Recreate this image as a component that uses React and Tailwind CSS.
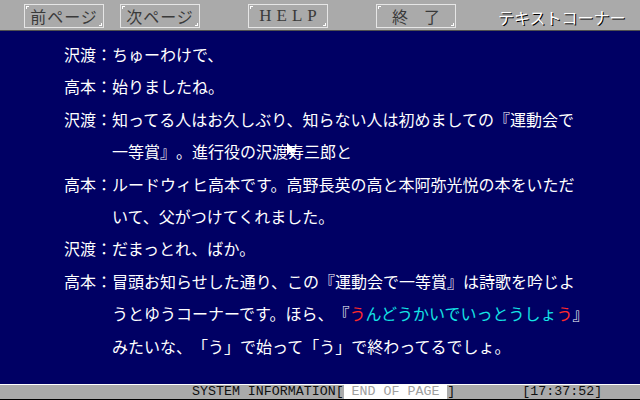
import React from 'react';

const jp = { fontFamily: '"Noto Sans CJK JP", "Noto Sans", sans-serif' };

const Corner = () => (
  <>
    <span className="absolute left-[1px] top-[1px] w-[3px] h-[1px] bg-white" />
    <span className="absolute left-[1px] top-[1px] w-[1px] h-[3px] bg-white" />
    <span className="absolute right-[1px] bottom-[1px] w-[3px] h-[1px] bg-white" />
    <span className="absolute right-[1px] bottom-[1px] w-[1px] h-[3px] bg-white" />
  </>
);

const ToolButton = ({ children, className = '' }) => (
  <div
    className={`relative w-[80px] h-[24px] border border-[#e6e6e6] flex items-center justify-center text-[#3a3a3a] ${className}`}
  >
    <Corner />
    {children}
  </div>
);

const Hl = ({ children, color }) => <span className={color}>{children}</span>;

const dialog = [
  { who: '沢渡', lines: ['ちゅーわけで、'] },
  { who: '高本', lines: ['始りましたね。'] },
  {
    who: '沢渡',
    lines: ['知ってる人はお久しぶり、知らない人は初めましての『運動会で', '一等賞』。進行役の沢渡寿三郎と'],
  },
  {
    who: '高本',
    lines: ['ルードウィヒ高本です。高野長英の高と本阿弥光悦の本をいただ', 'いて、父がつけてくれました。'],
  },
  { who: '沢渡', lines: ['だまっとれ、ばか。'] },
  {
    who: '高本',
    lines: [
      '冒頭お知らせした通り、この『運動会で一等賞』は詩歌を吟じよ',
      <>
        うとゆうコーナーです。ほら、『<Hl color="text-[#ff2a2a]">う</Hl>
        <Hl color="text-[#14e4e4]">んどうかいでいっとうしょ</Hl>
        <Hl color="text-[#ff2a2a]">う</Hl>』
      </>,
      'みたいな、「う」で始って「う」で終わってるでしょ。',
    ],
  },
];

export default function App() {
  return (
    <div className="w-[640px] h-[400px] flex flex-col bg-[#aaaaaa] overflow-hidden" style={jp}>
      {/* tool bar */}
      <header className="h-[31px] shrink-0 border-b border-[#505050] flex items-start pt-[4px]">
        <ToolButton className="ml-[24px] text-[16px] tracking-[1px]">前ページ</ToolButton>
        <ToolButton className="ml-[16px] text-[16px] tracking-[1px]">次ページ</ToolButton>
        <ToolButton className="ml-[48px]">
          <span
            className="text-[17px] tracking-[5px] pl-[5px]"
            style={{ fontFamily: '"Liberation Serif", serif' }}
          >
            HELP
          </span>
        </ToolButton>
        <ToolButton className="ml-[48px] text-[16px]">終　了</ToolButton>
        <div className="ml-[42px] mt-[1px] whitespace-nowrap text-white text-[16px] [text-shadow:1px_1px_0_#000]">
          テキストコーナー
        </div>
      </header>

      {/* text page */}
      <main className="relative flex-1 min-h-0 overflow-hidden bg-[#000064] pt-[7px] pl-[64px] text-white text-[16px] leading-[32.4px] [text-spacing-trim:space-all]">
        {dialog.map((d, i) => (
          <div key={i} className="flex">
            <div className="w-[48px] shrink-0 whitespace-nowrap">{d.who}：</div>
            <div>
              {d.lines.map((l, j) => (
                <div key={j} className="whitespace-nowrap">
                  {l}
                </div>
              ))}
            </div>
          </div>
        ))}
        {/* mouse pointer */}
        <svg className="absolute left-[287px] top-[112px]" width="10" height="15" viewBox="0 0 10 15">
          <path d="M0 0 L0 12 L3 9 L5 14 L7 13 L5 8 L9 8 Z" fill="#fff" />
        </svg>
      </main>

      {/* status bar */}
      <footer
        className="h-[16px] shrink-0 border-t border-white border-b border-b-black flex items-center text-[13.3px] leading-[14px] text-[#111]"
        style={{ fontFamily: '"Liberation Mono", monospace' }}
      >
        <span className="ml-[192px] whitespace-pre">SYSTEM INFORMATION[</span>
        <span className="bg-white text-[#a0a0a0] whitespace-pre h-full flex items-center"> END OF PAGE </span>
        <span className="whitespace-pre">]</span>
        <span className="ml-[67px] whitespace-pre">[17:37:52]</span>
      </footer>
    </div>
  );
}
